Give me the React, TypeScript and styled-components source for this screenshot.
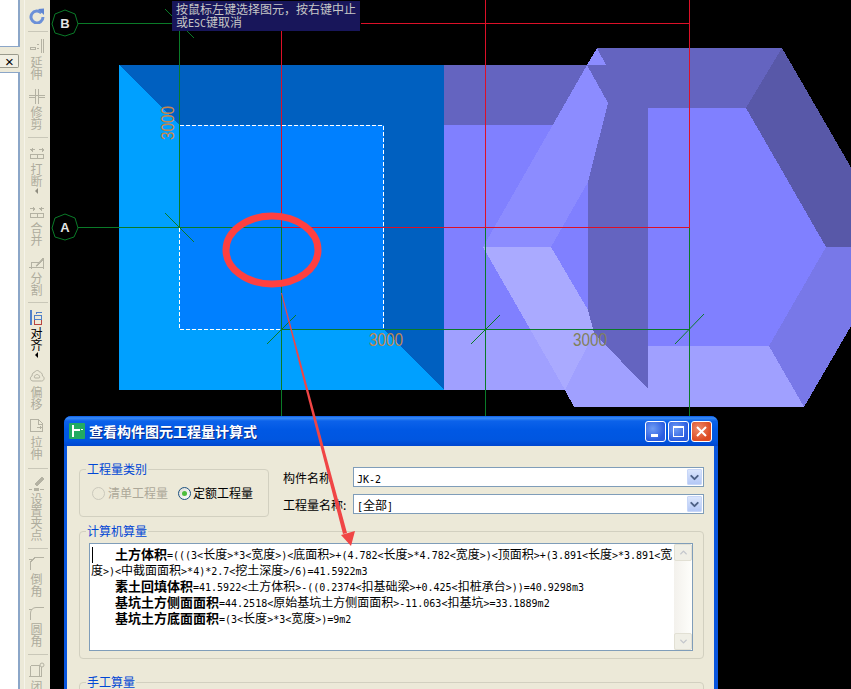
import React from "react";
import styled, { createGlobalStyle } from "styled-components";
import { ChevronDown, ChevronUp } from "lucide-react";

const CJK = `"Noto Sans CJK SC", "Liberation Sans", sans-serif`;
const MONO = `"DejaVu Sans Mono", "Liberation Mono", monospace`;

const GlobalStyle = createGlobalStyle`
  html, body {
    margin: 0;
    padding: 0;
    height: 100%;
    overflow: hidden;
    background: #000;
  }
  #root { height: 100%; }
`;

// half width runs are 6px wide, like the bitmap font of the original
function Mixed({ text }: { text: string }) {
  return (
    <>
      {text.split(/([\x00-\x7f]+)/).map((run, i) =>
        i % 2 ? <Latin key={i}>{run}</Latin> : run
      )}
    </>
  );
}

type IconName =
  | "extend" | "trim" | "break" | "merge" | "split" | "align"
  | "offset" | "stretch" | "grip" | "chamfer" | "fillet" | "close";

function ToolIcon({ name }: { name: IconName }) {
  const c = "#b4b2a3";
  return (
    <svg width="16" height="16" viewBox="0 0 16 16" fill="none" stroke={c} shapeRendering="crispEdges">
      {name === "extend" && (
        <>
          <path d="M1 9.5h5v2H1zM8 10.5h2M8 6.5h2" />
          <path d="M12.5 1v14M14.5 1v14" />
        </>
      )}
      {name === "trim" && (
        <>
          <path d="M0 7.5h16M0 9.5h6M10 9.5h6" />
          <path d="M6.5 1v15M9.5 1v15" />
        </>
      )}
      {name === "break" && (
        <>
          <path d="M1 4.5h5M2 3.5v2M3 2.5v4M10 4.5h5M13 2.5v4M14 3.5v2" />
          <path d="M1.5 9.5h13v4h-13zM8 9v5" />
        </>
      )}
      {name === "merge" && (
        <>
          <path d="M1 4.5h5M4 2.5v4M5 3.5v2M10 4.5h5M11 3.5v2M12 2.5v4" />
          <path d="M1.5 9.5h13v4h-13zM8 9v5" />
        </>
      )}
      {name === "split" && (
        <>
          <path d="M0 13.5h15M2.5 8v7M14.5 6v9M2 8.5h8" />
          <path d="M7 12l7-8 1 1-7 7z" fill={c} shapeRendering="auto" />
        </>
      )}
      {name === "align" && (
        <>
          <path d="M1 1h2v15H1z" fill="#4f7fc8" stroke="none" />
          <path d="M5.5 10.5h7v5h-7z" stroke="#b8433f" />
          <path d="M5.5 6.5h7v4h-7z" stroke="#4f7fc8" />
          <path d="M7 3.5h6M7 2.5v2" stroke="#4f7fc8" />
        </>
      )}
      {name === "offset" && (
        <path
          d="M4 13c-3 0-3.5-4-1-5 0-3 2-4 3-4 .5-2 4-2 4.500 0 1.500 0 3 1.500 3 4 2.500 1 2 5-1 5zM6 10c-1 0-1-2 0-2 0-2 4-2 4 0 1 0 1 2 0 2z"
          shapeRendering="auto"
        />
      )}
      {name === "stretch" && (
        <>
          <path d="M1.500 1.500h8l4 4v8h-12z" />
          <path d="M9.500 2v4h4M8 9.500h5M11 8v3" />
        </>
      )}
      {name === "grip" && (
        <>
          <path d="M6 9l7-7 2 2-7 7z" fill={c} shapeRendering="auto" />
          <path d="M0 14.500h3M11 14.500h4M5 13h4v3H5z" fill={c} />
        </>
      )}
      {name === "chamfer" && (
        <>
          <path d="M6 2.500h9M1.500 15V7M1.500 7L6 2.500" />
          <path d="M0 4.500h3M3 6l3-3" />
        </>
      )}
      {name === "fillet" && (
        <>
          <path d="M7 2.500h8M1.500 15V8" />
          <path d="M1.500 8C1.500 5 4 2.500 7 2.500" shapeRendering="auto" />
          <path d="M0 4.500h3" />
        </>
      )}
      {name === "close" && (
        <>
          <path d="M1.500 3.500h9v11h-12M1.500 3.500v11h11V5" />
          <circle cx="13" cy="3" r="2" shapeRendering="auto" />
        </>
      )}
    </svg>
  );
}

function Tool({ name, label, active, menu }: { name: IconName; label: string; active?: boolean; menu?: boolean }) {
  return (
    <ToolItem>
      <IconBox><ToolIcon name={name} /></IconBox>
      <ToolLabel $active={active}>{label}</ToolLabel>
      {menu && <MenuMark $active={active} />}
    </ToolItem>
  );
}

const GREEN = "#0a7a28";
const RED = "#dc1028";

function Drawing() {
  return (
    <CanvasSvg viewBox="50 0 801 689">
      <g shapeRendering="crispEdges">
        {/* first pit */}
        <rect x="119" y="65" width="325" height="325" fill="#00a0ff" />
        <polygon points="119,65 444,65 444,390 384,329 384,125 180,125" fill="#0060c0" />
        <rect x="180" y="125" width="204" height="204" fill="#0080ff" />

        {/* second pit, cut off by the hexagon */}
        <rect x="444" y="125" width="210" height="205" fill="#8080ff" />
        <rect x="444" y="65" width="150" height="60" fill="#6464c0" />
        <rect x="444" y="330" width="140" height="60" fill="#a0a0ff" />
        <polygon points="587,65 608,103 588,182 551,247 483,247" fill="#8c8cff" />
        <polygon points="597,48 606,65 587,65" fill="#8c8cff" />
        <polygon points="483,247 551,247 588,310 594,333 565,390" fill="#aaaaff" />
        <polygon points="594,333 648,389 648,346 769,346 804,407 574,407 565,390" fill="#a0a0ff" />
        <polygon
          points="597,48 782,48 746,108 648,108 648,389 594,333 588,310 588,182 608,103 587,65 606,65"
          fill="#6464c0"
        />
        <polygon points="648,108 746,108 826,247 769,346 648,346" fill="#8080ff" />
        <polygon points="782,48 746,108 826,247 897,247" fill="#5858a8" />
        <polygon points="826,247 769,346 804,407 897,247" fill="#7878e8" />

        {/* grid */}
        <g fill="none" strokeWidth="1">
          <path d="M78 23.500H172" stroke={GREEN} />
          <path d="M361 23.500H689.500" stroke={RED} />
          <path d="M78 227.500H281.500M179.500 31V227M281.500 227V416M281.500 329.500H689.500M485.500 227V416M689.500 227V416" stroke={GREEN} />
          <path d="M281.500 227.500H689.500M281.500 31V227M485.500 0V227M689.500 0V227" stroke={RED} />
        </g>
        <path
          d="M180 125.500H383.500V329M179.500 228V329.500H281"
          fill="none"
          stroke="#fff"
          strokeDasharray="4 2"
        />
      </g>

      <g stroke={GREEN} fill="none">
        <path d="M165 213L194 242M165 9L194 38M267 344L296 315M471 344L500 315M675 344L704 314" />
        <polygon points="65,10 75,14 78,24 74,33 65,36 55,33 52,24 55,14" />
        <polygon points="65,214 75,218 78,228 74,237 65,240 55,237 52,228 55,218" />
      </g>
      <AxisLetter x="65" y="28">B</AxisLetter>
      <AxisLetter x="65" y="232">A</AxisLetter>

      <Dimension x="0" y="0" textLength="34" lengthAdjust="spacingAndGlyphs" transform="translate(174 140) rotate(-90)" fill="#c8864c">3000</Dimension>
      <Dimension x="369" y="346" textLength="34" lengthAdjust="spacingAndGlyphs" fill="#c08850">3000</Dimension>
      <Dimension x="573" y="346" textLength="34" lengthAdjust="spacingAndGlyphs" fill="#80805c">3000</Dimension>

      <ellipse cx="272" cy="250" rx="46" ry="34" fill="none" stroke="#ff4040" strokeWidth="7" />
    </CanvasSvg>
  );
}

export default function App() {
  return (
    <>
      <GlobalStyle />
      <Page>
        <LeftRail>
          <TopPane />
          <TabStrip><CloseTab>×</CloseTab></TabStrip>
          <BottomPane />
        </LeftRail>

        <Toolbar>
          <ToolItem>
            <IconBox>
              <svg width="16" height="16" viewBox="0 0 16 16" fill="none">
                <path d="M12.500 5A6 6 0 1 0 14 9" stroke="#6b90d8" strokeWidth="3" />
                <path d="M9 1l6-.5V7z" fill="#5f86d2" />
              </svg>
            </IconBox>
          </ToolItem>
          <Separator $top={-1} $bottom={6} />
          <Tool name="extend" label="延伸" />
          <Tool name="trim" label="修剪" />
          <Separator $top={-1} $bottom={7} />
          <Tool name="break" label="打断" menu />
          <Tool name="merge" label="合并" />
          <Tool name="split" label="分割" />
          <Separator $top={-2} $bottom={6} />
          <Tool name="align" label="对齐" active menu />
          <Tool name="offset" label="偏移" />
          <Tool name="stretch" label="拉伸" />
          <Separator $top={0} $bottom={6} />
          <Tool name="grip" label="设置夹点" />
          <Separator $top={-1} $bottom={6} />
          <Tool name="chamfer" label="倒角" />
          <Tool name="fillet" label="圆角" />
          <Separator $top={-1} $bottom={7} />
          <Tool name="close" label="闭" />
        </Toolbar>

        <Canvas>
          <Drawing />
          <Hint>
            <div>按鼠标左键选择图元，按右键中止</div>
            <div><Mixed text="或ESC键取消" /></div>
          </Hint>
        </Canvas>

        <Dialog>
          <TitleBar>
            <AppIcon>
              <svg width="16" height="16" viewBox="0 0 16 16" fill="none" stroke="#fff" strokeWidth="2">
                <path d="M4 2v12M4 7h7" />
                <path d="M12 6.500h2" strokeWidth="1" />
              </svg>
            </AppIcon>
            <TitleText>查看构件图元工程量计算式</TitleText>
            <WindowButton>
              <svg width="13" height="13" viewBox="0 0 13 13"><rect x="2" y="9" width="7" height="3" fill="#fff" /></svg>
            </WindowButton>
            <WindowButton>
              <svg width="13" height="13" viewBox="0 0 13 13" fill="none" stroke="#fff">
                <rect x="1.500" y="1.500" width="10" height="10" />
                <rect x="1" y="1" width="11" height="2" fill="#fff" stroke="none" />
              </svg>
            </WindowButton>
            <WindowButton $close>
              <svg width="13" height="13" viewBox="0 0 13 13" stroke="#fff" strokeWidth="2">
                <path d="M2 2l9 9M11 2l-9 9" />
              </svg>
            </WindowButton>
          </TitleBar>

          <DialogBody>
            <TopRow>
              <CategoryGroup>
                <GroupTitle>工程量类别</GroupTitle>
                <RadioRow>
                  <RadioDot $disabled />
                  <RadioLabel $disabled>清单工程量</RadioLabel>
                  <RadioDot $checked />
                  <RadioLabel>定额工程量</RadioLabel>
                </RadioRow>
              </CategoryGroup>
              <FieldColumn>
                <FieldRow>
                  <FieldLabel>构件名称</FieldLabel>
                  <ComboBox><ComboText><Mixed text="JK-2" /></ComboText><ComboArrow><ChevronDown size={13} strokeWidth={3.5} /></ComboArrow></ComboBox>
                </FieldRow>
                <FieldRow>
                  <FieldLabel>工程量名称:</FieldLabel>
                  <ComboBox><ComboText><Mixed text="[全部]" /></ComboText><ComboArrow><ChevronDown size={13} strokeWidth={3.5} /></ComboArrow></ComboBox>
                </FieldRow>
              </FieldColumn>
            </TopRow>

            <ComputedGroup>
              <GroupTitle>计算机算量</GroupTitle>
              <FormulaBox>
                <FormulaText>
                  <Caret />
                  <FormulaLine $indent>
                    <b>土方体积</b>
                    <Mixed text="=(((3<长度>*3<宽度>)<底面积>+(4.782<长度>*4.782<宽度>)<顶面积>+(3.891<长度>*3.891<宽" />
                  </FormulaLine>
                  <FormulaLine>
                    <Mixed text="度>)<中截面面积>*4)*2.7<挖土深度>/6)=41.5922m3" />
                  </FormulaLine>
                  <FormulaLine $indent>
                    <b>素土回填体积</b>
                    <Mixed text="=41.5922<土方体积>-((0.2374<扣基础梁>+0.425<扣桩承台>))=40.9298m3" />
                  </FormulaLine>
                  <FormulaLine $indent>
                    <b>基坑土方侧面面积</b>
                    <Mixed text="=44.2518<原始基坑土方侧面面积>-11.063<扣基坑>=33.1889m2" />
                  </FormulaLine>
                  <FormulaLine $indent>
                    <b>基坑土方底面面积</b>
                    <Mixed text="=(3<长度>*3<宽度>)=9m2" />
                  </FormulaLine>
                </FormulaText>
                <ScrollTrack>
                  <ScrollButton><ChevronUp size={11} strokeWidth={3} /></ScrollButton>
                  <ScrollButton><ChevronDown size={11} strokeWidth={3} /></ScrollButton>
                </ScrollTrack>
              </FormulaBox>
            </ComputedGroup>

            <ManualGroup>
              <GroupTitle>手工算量</GroupTitle>
            </ManualGroup>
          </DialogBody>
        </Dialog>

        <ArrowLayer viewBox="0 0 851 689">
          <polygon points="281,293 282,293 347,533 343,534" fill="#f04545" />
          <polygon points="341,535 355,531 351,546" fill="#f04545" />
        </ArrowLayer>
      </Page>
    </>
  );
}

const Page = styled.div`
  position: relative;
  display: flex;
  width: 851px;
  height: 689px;
  overflow: hidden;
  font-family: ${CJK};
  font-size: 12px;
  color: #000;
`;

const Latin = styled.span`
  font-family: ${MONO};
  font-size: 10px;
`;

const LeftRail = styled.div`
  width: 24px;
  flex: none;
  display: flex;
  flex-direction: column;
  background: #ece9d8;
`;

const TopPane = styled.div`
  width: 18px;
  height: 46px;
  background: #fff;
  border-right: 2px solid #8ba6c8;
  border-bottom: 1px solid #8ba6c8;
`;

const TabStrip = styled.div`
  height: 17px;
  padding-top: 7px;
`;

const CloseTab = styled.div`
  width: 19px;
  height: 14px;
  box-sizing: border-box;
  padding-left: 1px;
  border: 1px solid #9a9a8c;
  border-left: none;
  border-radius: 0 2px 2px 0;
  background: #f1efe3;
  font: 15px/13px "Liberation Sans", sans-serif;
  text-align: center;
`;

const BottomPane = styled.div`
  flex: 1;
  margin-top: 1px;
  width: 18px;
  background: #fff;
  border-right: 2px solid #8ba6c8;
  border-top: 1px solid #8ba6c8;
`;

const Toolbar = styled.div`
  width: 26px;
  flex: none;
  padding-top: 8px;
  box-sizing: border-box;
  background: #ece9d8;
  border-left: 1px solid #f6f4ea;
  display: flex;
  flex-direction: column;
  align-items: center;
`;

const Separator = styled.div<{ $top: number; $bottom: number }>`
  flex: none;
  width: 20px;
  height: 1px;
  background: #c9c7b8;
  margin-top: ${(p) => p.$top}px;
  margin-bottom: ${(p) => p.$bottom}px;
`;

const ToolItem = styled.div`
  flex: none;
  display: flex;
  flex-direction: column;
  align-items: center;
  margin: 0 2px 8px 0;
`;

const IconBox = styled.div`
  flex: none;
  width: 16px;
  height: 16px;
  svg { display: block; }
`;

const ToolLabel = styled.div<{ $active?: boolean }>`
  width: 12px;
  margin-top: 2px;
  font-size: 12px;
  line-height: 12px;
  color: ${(p) => (p.$active ? "#000" : "#aeac9d")};
`;

const MenuMark = styled.div<{ $active?: boolean }>`
  width: 0;
  height: 0;
  margin-top: 1px;
  margin-bottom: 2px;
  border: 3px solid transparent;
  border-left: none;
  border-right: 3px solid ${(p) => (p.$active ? "#000" : "#8f8d80")};
`;

const Canvas = styled.div`
  position: relative;
  flex: 1;
  background: #000;
`;

const CanvasSvg = styled.svg`
  display: block;
  width: 801px;
  height: 689px;
`;

const AxisLetter = styled.text`
  font-family: "Liberation Sans", sans-serif;
  font-size: 13px;
  font-weight: 700;
  fill: #e4e4e4;
  text-anchor: middle;
`;

const Dimension = styled.text`
  font-family: "Liberation Sans", sans-serif;
  font-size: 18px;
`;

const Hint = styled.div`
  position: absolute;
  left: 122px;
  top: 1px;
  width: 184px;
  height: 29px;
  padding: 1px 0 0 4px;
  background: #18165a;
  color: #c6c6c6;
  font-size: 12px;
  line-height: 13px;
  white-space: nowrap;
`;

const Dialog = styled.div`
  position: absolute;
  left: 64px;
  top: 416px;
  width: 654px;
  height: 320px;
  box-sizing: border-box;
  display: flex;
  flex-direction: column;
  padding: 0 4px 0 3px;
  background: #0855dd;
  border-radius: 7px 7px 0 0;
`;

const TitleBar = styled.div`
  flex: none;
  height: 30px;
  margin: 0 -4px 0 -3px;
  padding: 0 6px 0 5px;
  display: flex;
  align-items: center;
  gap: 2px;
  border-radius: 7px 7px 0 0;
  background: linear-gradient(
    180deg,
    #0a5ce8 0,
    #3a8cf6 2px,
    #0c62ea 5px,
    #0058e4 14px,
    #0056e0 24px,
    #0047cf 30px
  );
`;

const AppIcon = styled.div`
  width: 16px;
  height: 16px;
  flex: none;
  background: #22ab62;
  border-radius: 1px;
`;

const TitleText = styled.div`
  flex: 1;
  margin-left: 2px;
  font-size: 14px;
  font-weight: 700;
  line-height: 16px;
  color: #fff;
  text-shadow: 1px 1px 0 #0a2a8a;
  white-space: nowrap;
`;

const WindowButton = styled.div<{ $close?: boolean }>`
  width: 21px;
  height: 21px;
  flex: none;
  box-sizing: border-box;
  border: 1px solid #fff;
  border-radius: 3px;
  display: flex;
  align-items: center;
  justify-content: center;
  background: ${(p) =>
    p.$close
      ? "radial-gradient(circle at 35% 35%, #ee8a6a, #dc4a22 70%)"
      : "radial-gradient(circle at 35% 35%, #6f9cf4, #2a5ce0 70%)"};
`;

const DialogBody = styled.div`
  flex: 1;
  display: flex;
  flex-direction: column;
  padding: 16px 10px 0 12px;
  background: #ece9d8;
`;

const TopRow = styled.div`
  display: flex;
  flex: none;
  height: 55px;
  margin-bottom: 7px;
`;

const Group = styled.fieldset`
  margin: 0;
  min-width: 0;
  box-sizing: border-box;
  padding: 0 6px;
  border: 1px solid #d2d0c0;
  border-radius: 4px;
`;

const GroupTitle = styled.legend`
  padding: 0 1px;
  font-size: 12px;
  line-height: 14px;
  color: #0046d5;
`;

const CategoryGroup = styled(Group)`
  flex: none;
  width: 190px;
  height: 55px;
`;

const RadioRow = styled.div`
  display: flex;
  align-items: center;
  height: 14px;
  padding: 10px 0 0 6px;
`;

const RadioDot = styled.span<{ $checked?: boolean; $disabled?: boolean }>`
  flex: none;
  position: relative;
  width: 13px;
  height: 13px;
  box-sizing: border-box;
  border-radius: 50%;
  border: 1px solid ${(p) => (p.$disabled ? "#cac8bb" : "#1c5180")};
  background: ${(p) => (p.$disabled ? "#ece9d8" : "linear-gradient(135deg, #dcdcd4, #fff)")};
  &::after {
    content: "";
    display: ${(p) => (p.$checked ? "block" : "none")};
    position: absolute;
    left: 3px;
    top: 3px;
    width: 5px;
    height: 5px;
    border-radius: 50%;
    background: #4dbd3b;
  }
`;

const RadioLabel = styled.span<{ $disabled?: boolean }>`
  flex: none;
  width: 60px;
  margin-left: ${(p) => (p.$disabled ? "3px" : "2px")};
  margin-right: 10px;
  color: ${(p) => (p.$disabled ? "#aca899" : "#000")};
  white-space: nowrap;
  line-height: 14px;
`;

const FieldColumn = styled.div`
  flex: 1;
  min-width: 0;
  margin-left: 14px;
  padding-top: 5px;
  display: flex;
  flex-direction: column;
  gap: 7px;
`;

const FieldRow = styled.div`
  display: flex;
  align-items: center;
  height: 20px;
`;

const FieldLabel = styled.div`
  flex: none;
  width: 70px;
  white-space: nowrap;
`;

const ComboBox = styled.div`
  flex: 1;
  height: 20px;
  box-sizing: border-box;
  display: flex;
  align-items: center;
  justify-content: space-between;
  padding-right: 1px;
  background: #fff;
  border: 1px solid #7f9db9;
`;

const ComboText = styled.span`
  padding-left: 3px;
  font-size: 12px;
`;

const ComboArrow = styled.span`
  width: 15px;
  height: 16px;
  display: flex;
  align-items: center;
  justify-content: center;
  border-radius: 1px;
  color: #4d6185;
  background: linear-gradient(180deg, #dbe6fc, #b4c8f6);
  border: 1px solid #c7d6f8;
  box-sizing: border-box;
`;

const ComputedGroup = styled(Group)`
  flex: none;
  height: 135px;
  margin-bottom: 16px;
`;

const FormulaBox = styled.div`
  height: 108px;
  box-sizing: border-box;
  display: flex;
  margin: 5px 4px 0 3px;
  background: #fff;
  border: 1px solid #7f9db9;
`;

const FormulaText = styled.div`
  position: relative;
  flex: 1;
  min-width: 0;
  padding: 2px 0 0 1px;
`;

const Caret = styled.span`
  position: absolute;
  left: 2px;
  top: 3px;
  width: 1px;
  height: 16px;
  background: #000;
`;

const FormulaLine = styled.div<{ $indent?: boolean }>`
  height: 16px;
  line-height: 16px;
  font-size: 12px;
  white-space: pre;
  padding-left: ${(p) => (p.$indent ? "24px" : "0")};
  b {
    font-size: 13px;
    font-weight: 700;
  }
`;

const ScrollTrack = styled.div`
  flex: none;
  width: 18px;
  display: flex;
  flex-direction: column;
  justify-content: space-between;
  background: linear-gradient(90deg, #f3f1ec, #fefefb);
`;

const ScrollButton = styled.div`
  height: 17px;
  display: flex;
  align-items: center;
  justify-content: center;
  color: #c3c6cc;
  background: #f0efe6;
  border: 1px solid #e2e0d4;
  border-radius: 2px;
  box-sizing: border-box;
`;

const ManualGroup = styled(Group)`
  flex: none;
  height: 60px;
`;

const ArrowLayer = styled.svg`
  position: absolute;
  left: 0;
  top: 0;
  width: 851px;
  height: 689px;
  pointer-events: none;
`;
